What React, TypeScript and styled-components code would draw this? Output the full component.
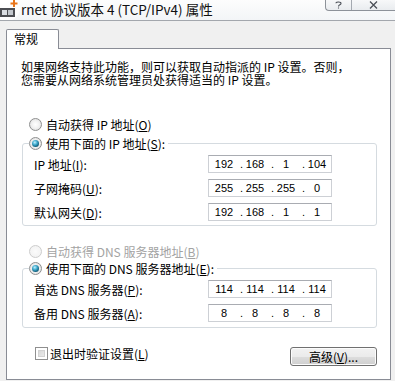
import React from "react";
import styled, { createGlobalStyle } from "styled-components";

const GlobalStyle = createGlobalStyle`
  html, body {
    margin: 0;
    padding: 0;
  }
  body {
    width: 395px;
    height: 381px;
    overflow: hidden;
    background: #f0f0f0;
    font-family: "Noto Sans CJK SC", "Liberation Sans", sans-serif;
    font-size: 12px;
    color: #000;
  }
`;

const Window = styled.div`
  width: 395px;
  height: 381px;
  display: flex;
  flex-direction: column;
  background: #f0f0f0;
  overflow: hidden;
`;

const TitleBar = styled.div`
  height: 20px;
  flex: none;
  display: flex;
  align-items: flex-start;
  background: linear-gradient(#fdfdfd, #f3f5f7);
  border-bottom: 1px solid #a3a7ad;
`;

const TitleText = styled.div`
  font-size: 13.5px;
  line-height: 18px;
  white-space: nowrap;
  color: #111;
`;

const CaptionButtons = styled.div`
  margin-left: auto;
  display: flex;
  height: 11px;
  box-sizing: border-box;
  border: 1px solid #8d9299;
  border-top: none;
  border-right: none;
  border-radius: 0 0 0 4px;
  background: linear-gradient(#f7f8f9, #e9ecef);
`;

const CaptionButton = styled.div<{ $width: number }>`
  width: ${(p) => p.$width}px;
  display: flex;
  justify-content: center;
  align-items: center;
  & + & {
    border-left: 1px solid #a4a9b0;
  }
`;

const TabStrip = styled.div`
  display: flex;
  margin: 8px 0 0 6px;
`;

const Tab = styled.div`
  position: relative;
  z-index: 1;
  box-sizing: border-box;
  width: 53px;
  height: 20px;
  margin-bottom: -1px;
  padding-left: 7px;
  border: 1px solid #898c95;
  border-bottom: none;
  border-radius: 2px 2px 0 0;
  background: #fff;
  line-height: 18px;
`;

const Panel = styled.div`
  flex: 1;
  margin: 0 4px 1px 6px;
  padding: 0 13px 0 14px;
  border: 1px solid #898c95;
  background: #fff;
  display: flex;
  flex-direction: column;
`;

const Description = styled.p`
  margin: 11px 0 0;
  line-height: 13px;
  white-space: nowrap;
`;

const OptionRow = styled.label<{ $disabled?: boolean; $gap?: number }>`
  display: flex;
  align-items: center;
  gap: 4px;
  height: 16px;
  margin-top: ${(p) => p.$gap ?? 0}px;
  padding-left: 8px;
  white-space: nowrap;
  color: ${(p) => (p.$disabled ? "#a3a3a3" : "#000")};
`;

const RadioCircle = styled.span<{ $checked?: boolean; $disabled?: boolean }>`
  flex: none;
  width: 13px;
  height: 13px;
  box-sizing: border-box;
  border-radius: 50%;
  border: 1px solid ${(p) => (p.$disabled ? "#cdcdcd" : "#8e8f8f")};
  background: ${(p) =>
    p.$disabled
      ? "radial-gradient(circle, #fbfbfb 0%, #f0f0f0 100%)"
      : "radial-gradient(circle, #ffffff 0%, #f2f2f2 45%, #d6d6d6 100%)"};
  display: flex;
  align-items: center;
  justify-content: center;
  &::after {
    content: "";
    display: ${(p) => (p.$checked ? "block" : "none")};
    width: 7px;
    height: 7px;
    border-radius: 50%;
    background: radial-gradient(
      circle at 40% 35%,
      #c4f0fd 0%,
      #44aed0 35%,
      #11607e 70%,
      #0a3b51 100%
    );
  }
`;

const GroupBox = styled.fieldset<{ $gap: number }>`
  margin: ${(p) => p.$gap}px 0 0 1px;
  padding: 0;
  min-width: 0;
  border: 1px solid #d5dbe0;
  border-radius: 3px;
`;

const GroupLegend = styled.legend`
  margin-left: 6px;
  padding: 0 3px 0 0;
`;

const LegendInner = styled.span`
  display: flex;
  align-items: center;
  gap: 4px;
  height: 16px;
  white-space: nowrap;
`;

const GroupBody = styled.div<{ $bottom: number }>`
  display: flex;
  flex-direction: column;
  gap: 6px;
  padding: 4px 44px ${(p) => p.$bottom}px 11px;
`;

const FieldRow = styled.div`
  display: grid;
  grid-template-columns: 1fr 124px;
  align-items: center;
  height: 18px;
  white-space: nowrap;
`;

const IpBox = styled.div`
  box-sizing: border-box;
  width: 124px;
  height: 18px;
  display: flex;
  align-items: center;
  padding-left: 3px;
  border: 1px solid #cdd0d5;
  border-top-color: #a9acb2;
  background: #fff;
  font-family: "Liberation Sans", Arial, sans-serif;
  font-size: 11px;
  color: #000;
`;

const Octet = styled.span`
  width: 24px;
  text-align: center;
`;

const Dot = styled.span`
  width: 7px;
  text-align: right;
`;

const Key = styled.span`
  text-decoration: underline;
`;

const BottomRow = styled.div`
  display: flex;
  justify-content: space-between;
  align-items: flex-start;
  margin-top: 17px;
`;

const CheckRow = styled.label`
  display: flex;
  align-items: center;
  gap: 2px;
  height: 16px;
  padding-left: 14px;
  white-space: nowrap;
`;

const CheckBox = styled.span`
  flex: none;
  width: 13px;
  height: 13px;
  box-sizing: border-box;
  border: 1px solid #8f8f8f;
  background: #f4f4f4;
  box-shadow: inset 0 0 0 2px #fff, inset 0 0 0 3px #d2d2d2;
  background-image: linear-gradient(135deg, #cfcfcf, #f3f3f3);
`;

const PushButton = styled.button`
  margin-top: 2px;
  width: 87px;
  height: 19px;
  padding: 0;
  border: 1px solid #707070;
  border-radius: 3px;
  background: linear-gradient(#f2f2f2 0%, #ebebeb 50%, #dddddd 51%, #cfcfcf 100%);
  box-shadow: inset 0 0 0 1px #fcfcfc;
  font-family: "Noto Sans CJK SC", "Liberation Sans", sans-serif;
  font-size: 12px;
  line-height: 16px;
  color: #000;
`;

function AppIcon() {
  return (
    <svg width="21" height="20" viewBox="0 0 21 20" style={{ flex: "none" }}>
      <circle cx="7" cy="8" r="13" fill="#ffffff" opacity="0.8" />
      <rect x="0" y="8" width="15" height="9" fill="#4b4d52" />
      <rect x="2" y="10" width="5" height="5" fill="#d9dde2" />
      <rect x="8" y="10" width="5" height="5" fill="#c2c7cd" />
      <rect x="13" y="0" width="2" height="7" fill="#e8751a" />
      <rect x="10.5" y="2.5" width="7" height="2" fill="#e8751a" />
    </svg>
  );
}

function Ip({ value }: { value: string }) {
  const parts = value.split(".");
  return (
    <IpBox>
      {parts.map((part, i) => (
        <React.Fragment key={i}>
          <Octet>{part}</Octet>
          {i < parts.length - 1 && <Dot>.</Dot>}
        </React.Fragment>
      ))}
    </IpBox>
  );
}

function App() {
  return (
    <Window>
      <GlobalStyle />
      <TitleBar>
        <AppIcon />
        <TitleText>rnet 协议版本 4 (TCP/IPv4) 属性</TitleText>
        <CaptionButtons>
          <CaptionButton $width={25}>
            <svg width="7" height="8" viewBox="0 0 7 8">
              <path
                d="M1 2.2 C1 0.6 6 0.6 6 2.4 C6 3.8 3.5 3.8 3.5 5.4 M3.5 6.6 V7.6"
                fill="none"
                stroke="#4a4f57"
                strokeWidth="1.1"
              />
            </svg>
          </CaptionButton>
          <CaptionButton $width={43}>
            <svg width="9" height="8" viewBox="0 0 9 8">
              <path d="M1 0.5 L8 7.5 M8 0.5 L1 7.5" stroke="#4a4f57" strokeWidth="1.3" />
            </svg>
          </CaptionButton>
        </CaptionButtons>
      </TitleBar>

      <TabStrip>
        <Tab>常规</Tab>
      </TabStrip>

      <Panel>
        <Description>
          如果网络支持此功能，则可以获取自动指派的 IP 设置。否则，
          <br />
          您需要从网络系统管理员处获得适当的 IP 设置。
        </Description>

        <OptionRow $gap={30}>
          <RadioCircle />
          <span>
            自动获得 IP 地址(<Key>O</Key>)
          </span>
        </OptionRow>

        <GroupBox $gap={3}>
          <GroupLegend>
            <LegendInner>
              <RadioCircle $checked />
              <span>
                使用下面的 IP 地址(<Key>S</Key>):
              </span>
            </LegendInner>
          </GroupLegend>
          <GroupBody $bottom={4}>
            <FieldRow>
              <span>
                IP 地址(<Key>I</Key>):
              </span>
              <Ip value="192.168.1.104" />
            </FieldRow>
            <FieldRow>
              <span>
                子网掩码(<Key>U</Key>):
              </span>
              <Ip value="255.255.255.0" />
            </FieldRow>
            <FieldRow>
              <span>
                默认网关(<Key>D</Key>):
              </span>
              <Ip value="192.168.1.1" />
            </FieldRow>
          </GroupBody>
        </GroupBox>

        <OptionRow $gap={17} $disabled>
          <RadioCircle $disabled />
          <span>
            自动获得 DNS 服务器地址(<Key>B</Key>)
          </span>
        </OptionRow>

        <GroupBox $gap={1}>
          <GroupLegend>
            <LegendInner>
              <RadioCircle $checked />
              <span>
                使用下面的 DNS 服务器地址(<Key>E</Key>):
              </span>
            </LegendInner>
          </GroupLegend>
          <GroupBody $bottom={5}>
            <FieldRow>
              <span>
                首选 DNS 服务器(<Key>P</Key>):
              </span>
              <Ip value="114.114.114.114" />
            </FieldRow>
            <FieldRow>
              <span>
                备用 DNS 服务器(<Key>A</Key>):
              </span>
              <Ip value="8.8.8.8" />
            </FieldRow>
          </GroupBody>
        </GroupBox>

        <BottomRow>
          <CheckRow>
            <CheckBox />
            <span>
              退出时验证设置(<Key>L</Key>)
            </span>
          </CheckRow>
          <PushButton>
            高级(<Key>V</Key>)...
          </PushButton>
        </BottomRow>
      </Panel>
    </Window>
  );
}

export default App;
